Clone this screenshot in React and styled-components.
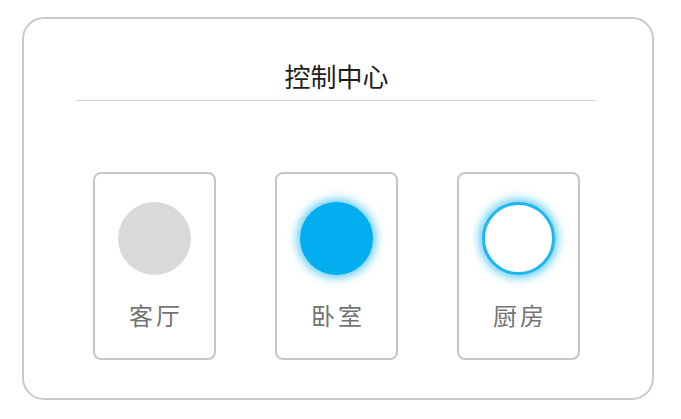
import React from "react";
import styled, { createGlobalStyle } from "styled-components";

const rooms = [
  { name: "客厅", state: "off" },
  { name: "卧室", state: "on" },
  { name: "厨房", state: "ring" },
];

const App = () => {
  return (
    <>
      <GlobalStyle />
      <Panel>
        <Title>控制中心</Title>
        <Divider />
        <RoomRow>
          {rooms.map((room) => (
            <RoomCard key={room.name}>
              <Lamp $state={room.state} />
              <RoomName>{room.name}</RoomName>
            </RoomCard>
          ))}
        </RoomRow>
      </Panel>
    </>
  );
};

const GlobalStyle = createGlobalStyle`
  html, body {
    margin: 0;
    padding: 0;
    background: #ffffff;
  }
  body {
    padding: 17px 0 0 22px;
    font-family: "Noto Sans CJK SC", "Noto Sans", sans-serif;
  }
`;

const Panel = styled.div`
  box-sizing: border-box;
  width: 632px;
  height: 383px;
  border: 2px solid #c9c9c9;
  border-radius: 22px;
  display: flex;
  flex-direction: column;
  align-items: center;
  padding: 0 55px 0 52px;
`;

const Title = styled.h1`
  margin: 39px 0 0;
  font-size: 26px;
  font-weight: 400;
  line-height: 36px;
  color: #1e1e1e;
`;

const Divider = styled.div`
  align-self: stretch;
  height: 1px;
  margin-top: 6px;
  background: #d3d9e4;
`;

const RoomRow = styled.div`
  display: flex;
  justify-content: center;
  gap: 59px;
  margin-top: 71px;
`;

const RoomCard = styled.div`
  box-sizing: border-box;
  width: 123px;
  height: 188px;
  border: 2px solid #c6c6c6;
  border-radius: 8px;
  display: flex;
  flex-direction: column;
  align-items: center;
  padding-top: 28px;
`;

const Lamp = styled.div`
  box-sizing: border-box;
  width: 73px;
  height: 73px;
  border-radius: 50%;
  background: ${(p) =>
    p.$state === "off" ? "#d9d9d9" : p.$state === "on" ? "#03aef0" : "#ffffff"};
  border: ${(p) => (p.$state === "ring" ? "3px solid #1eb6ee" : "none")};
  box-shadow: ${(p) =>
    p.$state === "off" ? "none" : "0 0 10px 3px rgba(30, 182, 238, 0.7)"};
`;

const RoomName = styled.div`
  margin-top: 24px;
  padding-left: 3px;
  font-size: 24px;
  line-height: 32px;
  color: #747474;
  letter-spacing: 3px;
`;

export default App;
